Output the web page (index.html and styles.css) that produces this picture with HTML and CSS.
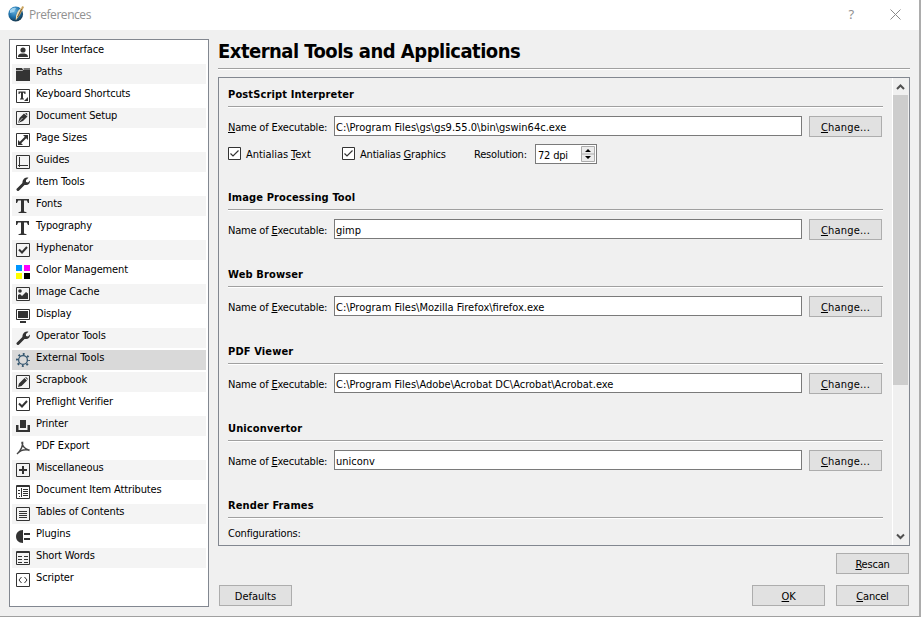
FILE: index.html
```html
<!DOCTYPE html>
<html lang="en">
<head>
<meta charset="utf-8">
<title>Preferences</title>
<link rel="stylesheet" href="styles.css">
</head>
<body>
<div class="window">
  <header class="titlebar">
    <svg class="logo" width="16" height="16" viewBox="0 0 16 16"><defs><radialGradient id="ball" cx=".4" cy=".3" r=".7"><stop offset="0" stop-color="#69b5e2"/><stop offset=".6" stop-color="#1c6fa8"/><stop offset="1" stop-color="#15384f"/></radialGradient></defs><circle cx="7.7" cy="8" r="7.4" fill="url(#ball)"/><path d="M2 4Q5 1 8 2L6 6 2 7Z" fill="#9dd1ee"/><path d="M14.5 0L16 1 12 9 8 14 7.500 13.500 9 7Z" fill="#c9a15c"/><path d="M14.500 0L8 14 8 10 10 5Z" fill="#f1e2bd"/><path d="M13.500 3L9.500 11" stroke="#5d4420" stroke-width=".8"/></svg>
    <span class="caption">Preferences</span>
    <span class="help">?</span>
    <svg class="close" width="11" height="11" viewBox="0 0 11 11"><path d="M.5 .5L10.500 10.500M10.500 .5L.5 10.500" stroke="#8a8a8a" fill="none"/></svg>
  </header>
  <div class="body">
    <ul class="nav">
      <li><svg viewBox="0 0 14 14"><path class="l" d="M.5.5h13v13H.5z"/><path d="M2 12c0-3 2-3 3.500-3.500h3c2 .5 3.500 1 3.500 3.500z"/><circle cx="7" cy="5" r="2.600"/></svg><span>User Interface</span></li>
      <li><svg viewBox="0 0 14 14"><path d="M0 1h6l1 1.500L8 1h6v13H0z"/><path d="M0 3.500h6.500L8 2h6" stroke="#ccc" fill="none" stroke-width=".8"/></svg><span>Paths</span></li>
      <li><svg viewBox="0 0 14 14"><path class="l" d="M.5.5h13v13H.5z"/><path d="M2.500 2.500h7v2.500h-1L8 3.700H7v5.600l1 .4v.8H4v-.8l1-.4V3.700H4L3.500 5h-1zM12 8v4H8z"/></svg><span>Keyboard Shortcuts</span></li>
      <li><svg viewBox="0 0 14 14"><path class="l" d="M.5.5h13v13H.5z"/><path d="M2 12l1.500-5L8 2.500l3.500 3L7 10z"/><path d="M9 2.500l2-.5.500 2.500z"/><path d="M2.500 11.500l4-4.500" stroke="#ddd" stroke-width=".8"/></svg><span>Document Setup</span></li>
      <li><svg viewBox="0 0 14 14"><path class="l" d="M.5.5h13v13H.5z"/><path d="M7 2h5v5l-1.800-1.800L5.200 10.200 7 12H2V7l1.800 1.800 5-5z"/></svg><span>Page Sizes</span></li>
      <li><svg viewBox="0 0 14 14"><path class="l" d="M.5.5h13v13H.5zM3.500 2v10M2 10.500h10"/></svg><span>Guides</span></li>
      <li><svg viewBox="0 0 14 14"><path d="M8 6.500L2 12.500" stroke="#333" stroke-width="3" stroke-linecap="round"/><path d="M12.500.800L10 3v2l2 .5 2-2c.3 3-1.800 5-4.500 4.500C6.500 8 6 6 6.800 3.500 8 1 10 0 12.500.800z"/></svg><span>Item Tools</span></li>
      <li><svg viewBox="0 0 14 14"><path d="M0 0h13v4h-1L10.800 1.500H8v11l2.500.7v.8h-8v-.8l2.500-.7v-11H2.200L1 4H0z"/></svg><span>Fonts</span></li>
      <li><svg viewBox="0 0 14 14"><path d="M0 0h13v4h-1L10.800 1.500H8v11l2.500.7v.8h-8v-.8l2.500-.7v-11H2.200L1 4H0z"/></svg><span>Typography</span></li>
      <li><svg viewBox="0 0 14 14"><path class="l" d="M.5.5h13v13H.5z"/><path class="l" stroke-width="2" d="M3 6.500L6 9.500 11 4"/></svg><span>Hyphenator</span></li>
      <li><svg viewBox="0 0 14 14"><path fill="#0096ff" d="M0 0h6v6H0z"/><path fill="#f0f" d="M8 0h6v6H8z"/><path fill="#ff0" d="M0 8h6v6H0z"/><path fill="#000" d="M8 8h6v6H8z"/></svg><span>Color Management</span></li>
      <li><svg viewBox="0 0 14 14"><path class="l" d="M.5.5h13v13H.5z"/><circle cx="4" cy="4" r="1.800"/><path d="M2 12V8l2-1 2 2 4-4 2 1.500V12z"/></svg><span>Image Cache</span></li>
      <li><svg viewBox="0 0 14 14"><path class="l" d="M.5.5h13v10H.5z"/><path d="M2 2h10v7H2zM4 12h6v2H4z"/></svg><span>Display</span></li>
      <li><svg viewBox="0 0 14 14"><path d="M8 6.500L2 12.500" stroke="#333" stroke-width="3" stroke-linecap="round"/><path d="M12.500.800L10 3v2l2 .5 2-2c.3 3-1.800 5-4.500 4.500C6.500 8 6 6 6.800 3.500 8 1 10 0 12.500.800z"/></svg><span>Operator Tools</span></li>
      <li class="selected"><svg viewBox="0 0 14 14"><g fill="none" stroke="#34566f"><circle cx="7" cy="7" r="4.400" stroke-width="1.300"/><circle cx="7" cy="7" r="6" stroke-width="2" stroke-dasharray="1.900 2.812" stroke-dashoffset=".95"/></g></svg><span>External Tools</span></li>
      <li><svg viewBox="0 0 14 14"><path class="l" d="M.5.5h13v13H.5z"/><path d="M2 12l1-3.500L8.500 3 11 5.500 5.500 11zM9.200 2.500L10 2l2 2-.5.800z"/></svg><span>Scrapbook</span></li>
      <li><svg viewBox="0 0 14 14"><path class="l" d="M.5.5h13v13H.5z"/><path class="l" stroke-width="2" d="M3 6.500L6 9.500 11 4"/></svg><span>Preflight Verifier</span></li>
      <li><svg viewBox="0 0 14 14"><path d="M4 1h6v8H4zM0 6h2.500v5h9V6H14v7H0z"/></svg><span>Printer</span></li>
      <li><svg viewBox="0 0 14 14"><path d="M6 .8C5.500 3.500 8 8 13.500 9.500M6.500.8C7.500 4 5 9.500 1 13M2 12c2-2.500 6-4 11.500-3" fill="none" stroke="#444" stroke-width="1.500"/></svg><span>PDF Export</span></li>
      <li><svg viewBox="0 0 14 14"><path class="l" d="M.5.5h13v13H.5z"/><path d="M6 3h2v3h3v2H8v3H6V8H3V6h3z"/></svg><span>Miscellaneous</span></li>
      <li><svg viewBox="0 0 14 14"><path class="l" d="M.5.5h13v13H.5zM0 1.500h14M7 4.500h5M7 6.500h5M7 8.500h5M7 10.500h5M2 5.500h2M2 8.500h2M3 11.500h1M5.500 3v9"/></svg><span>Document Item Attributes</span></li>
      <li><svg viewBox="0 0 14 14"><path class="l" d="M.5.5h13v13H.5zM3 4.500h8M3 6.500h8M3 8.500h8M3 10.500h8"/></svg><span>Tables of Contents</span></li>
      <li><svg viewBox="0 0 14 14"><path d="M7 1v13C-2.300 14-2.300 1 7 1zM8 4h6v2H8zM8 9h6v2H8z"/></svg><span>Plugins</span></li>
      <li><svg viewBox="0 0 14 14"><path class="l" d="M.5.5h13v13H.5zM0 1.500h14M2 5.500h4M8 5.500h4M2 8.500h4M8 8.500h4M2 11.500h4M8 11.500h4"/></svg><span>Short Words</span></li>
      <li><svg viewBox="0 0 14 14"><path class="l" d="M.5.5h13v13H.5zM5.500 4L3 7l2.500 3M8.500 4L11 7l-2.500 3"/></svg><span>Scripter</span></li>
    </ul>
    <main class="main">
      <h1><span>External Tools and Applications</span></h1>
      <div class="panel">
        <div class="content">
          <section class="first">
            <h2>PostScript Interpreter</h2>
            <div class="row"><label><u>N</u>ame of Executable:</label><div class="field">C:\Program Files\gs\gs9.55.0\bin\gswin64c.exe</div><div class="btn wide"><span><u>C</u>hange...</span></div></div>
            <div class="options">
              <span class="check c1"><svg viewBox="0 0 13 13"><path d="M.5.5h12v12H.5z" fill="#fff" stroke="#333"/><path d="M2.500 6.500L5 9l5.500-5.500" fill="none" stroke="#333" stroke-width="1.200"/></svg><span>Antialias <u>T</u>ext</span></span>
              <span class="check c2"><svg viewBox="0 0 13 13"><path d="M.5.5h12v12H.5z" fill="#fff" stroke="#333"/><path d="M2.500 6.500L5 9l5.500-5.500" fill="none" stroke="#333" stroke-width="1.200"/></svg><span>Antialias <u>G</u>raphics</span></span>
              <span class="res">Resolution:</span>
              <span class="spin"><span>72 dpi</span><svg width="14" height="16" viewBox="0 0 14 16"><path d="M.5.5h13v15H.5zM.5 8h13" fill="#ececec" stroke="#acacac"/><path d="M7 3l3 3H4zM7 13l3-3H4z"/></svg></span>
            </div>
          </section>
          <section>
            <h2>Image Processing Tool</h2>
            <div class="row"><label>Name of <u>E</u>xecutable:</label><div class="field">gimp</div><div class="btn wide"><span><u>C</u>hange...</span></div></div>
          </section>
          <section>
            <h2>Web Browser</h2>
            <div class="row"><label>Name of <u>E</u>xecutable:</label><div class="field">C:\Program Files\Mozilla Firefox\firefox.exe</div><div class="btn wide"><span><u>C</u>hange...</span></div></div>
          </section>
          <section>
            <h2>PDF Viewer</h2>
            <div class="row"><label>Name of <u>E</u>xecutable:</label><div class="field">C:\Program Files\Adobe\Acrobat DC\Acrobat\Acrobat.exe</div><div class="btn wide"><span><u>C</u>hange...</span></div></div>
          </section>
          <section>
            <h2>Uniconvertor</h2>
            <div class="row"><label>Name of <u>E</u>xecutable:</label><div class="field">uniconv</div><div class="btn wide"><span><u>C</u>hange...</span></div></div>
          </section>
          <section class="last">
            <h2>Render Frames</h2>
            <p>Configurations:</p>
          </section>
        </div>
        <div class="scroll">
          <svg width="15" height="17" viewBox="0 0 15 17"><path d="M4 11l3.500-3.500L11 11" fill="none" stroke="#505050" stroke-width="2"/></svg>
          <div class="thumb"></div>
          <svg class="down" width="15" height="17" viewBox="0 0 15 17"><path d="M4 6.500l3.500 3.500L11 6.500" fill="none" stroke="#505050" stroke-width="2"/></svg>
        </div>
      </div>
      <div class="rescan"><div class="btn"><span><u>R</u>escan</span></div></div>
      <footer><div class="btn def"><span>Defaults</span></div><div class="btn"><span><u>O</u>K</span></div><div class="btn"><span><u>C</u>ancel</span></div></footer>
    </main>
  </div>
</div>
</body>
</html>
```
FILE: styles.css
```css
* { box-sizing: border-box; }
body { margin: 0; background: #f0f0f0; color: #000; font: 11px/14px "DejaVu Sans Condensed", "DejaVu Sans", sans-serif; font-stretch: condensed; letter-spacing: -0.2px; }
.window { width: 921px; height: 617px; display: flex; flex-direction: column; border-right: 2px solid #acacac; border-bottom: 1px solid #a0a0a0; overflow: hidden; white-space: nowrap; }
.titlebar { height: 30px; flex: none; background: #fff; display: flex; align-items: center; padding: 0 18px 0 8px; color: #919191; }
.logo { margin-top: -3px; }
.caption { margin-left: 5px; flex: 1; font: 12px/16px "Open Sans", "Noto Sans", sans-serif; letter-spacing: -0.45px; }
.help { font: 13px/16px "Noto Sans", sans-serif; margin-right: 36px; margin-top: -2px; }
.close { margin-top: -1px; }
.body { flex: 1; display: flex; padding: 9px 9px 0; }
.nav { list-style: none; margin: 0; padding: 2px 2px 0; width: 200px; height: 568px; border: 1px solid #828790; background: #fff; flex: none; }
.nav li { height: 20px; margin-bottom: 2px; padding: 3px 0 0 4px; display: flex; align-items: flex-start; letter-spacing: -0.14px; }
.nav li:nth-child(even) { background: #f4f4f4; }
.nav li.selected { background: #d9d9d9; letter-spacing: 0; }
.nav svg { width: 14px; height: 14px; flex: none; fill: #333; }
.nav .l { fill: none; stroke: #333; }
.nav span { margin: -2px 0 0 6px; }
.main { flex: 1; margin-left: 9px; display: flex; flex-direction: column; }
h1 { margin: 0; height: 31px; width: 692px; border-bottom: 1px solid #fff; box-shadow: inset 0 -1px #a0a0a0; font-size: 20px; line-height: 24px; letter-spacing: -0.51px; }
.panel { margin-top: 7px; width: 692px; height: 469px; border: 1px solid #828790; display: flex; }
.content { flex: 1; padding: 9px 0 0 9px; overflow: hidden; }
section { height: 77px; width: 655px; }
section.first { height: 103px; }
section.last { height: 50px; }
h2 { margin: 0; height: 21px; padding-top: 1px; font-size: 11px; line-height: 14px; letter-spacing: 0.13px; border-bottom: 1px solid #fff; box-shadow: inset 0 -1px #a0a0a0; }
.row { display: flex; margin-top: 8px; height: 21px; }
.row label { width: 106px; padding-top: 5px; }
.field { width: 468px; height: 20px; border: 1px solid #7a7a7a; background: #fff; padding: 4px 1px 0; margin-right: 7px; letter-spacing: 0; }
.btn { width: 73px; height: 21px; border: 1px solid #adadad; background: #e1e1e1; display: flex; justify-content: center; padding-top: 4px; flex: none; }
.btn.wide { letter-spacing: 0.2px; }
u { text-decoration: underline; text-underline-offset: 1px; text-decoration-thickness: 1px; text-decoration-skip-ink: none; }
.options { display: flex; height: 20px; margin-top: 7px; align-items: flex-start; }
.check { display: flex; padding-top: 3px; }
.check svg { width: 13px; height: 13px; margin-right: 5px; }
.check span { margin-top: 1px; }
.c1 { width: 114px; letter-spacing: -0.05px; }
.c2 { width: 132px; }
.res { width: 61px; padding-top: 4px; }
.spin { width: 62px; height: 20px; border: 1px solid #7a7a7a; background: #fff; display: flex; justify-content: space-between; padding: 1px 1px 0 2px; }
.spin > span { padding-top: 3px; }
.last p { margin: 8px 0 0; }
.scroll { width: 17px; border-left: 1px solid #fff; display: flex; flex-direction: column; flex: none; }
.thumb { width: 15px; height: 290px; background: #cdcdcd; }
.down { margin-top: auto; }
.rescan { margin-top: 7px; width: 691px; display: flex; justify-content: flex-end; }
footer { margin-top: 11px; width: 691px; padding-left: 1px; display: flex; gap: 11px; }
.def { margin-right: auto; letter-spacing: 0; }
```
